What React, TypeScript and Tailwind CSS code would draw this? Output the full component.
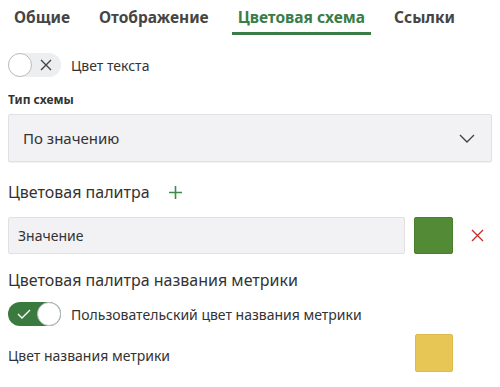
import { useState } from "react"

const TABS = ["Общие", "Отображение", "Цветовая схема", "Ссылки"]

function Toggle({ on, onChange }: { on: boolean; onChange: () => void }) {
  return (
    <button
      onClick={onChange}
      className={`relative w-[53px] h-6 rounded-full shrink-0 flex items-center ${on ? "bg-[#3b7a3f]" : "bg-[#eceef0]"}`}
    >
      {on ? (
        <svg className="absolute left-[9px] top-[7px]" width="14" height="10" viewBox="0 0 14 10" fill="none">
          <path d="M1 5l4 4 8-8" stroke="#fff" strokeWidth="1.4" />
        </svg>
      ) : (
        <svg className="absolute right-[9px] top-[6px]" width="12" height="12" viewBox="0 0 12 12" fill="none">
          <path d="M1 1l10 10M11 1L1 11" stroke="#444" strokeWidth="1.4" />
        </svg>
      )}
      <span
        className={`absolute top-0 w-6 h-6 rounded-full bg-white border border-[#b9bcc0] ${on ? "right-0" : "left-0"}`}
      />
    </button>
  )
}

export default function App() {
  const [tab, setTab] = useState(2)
  const [textColor, setTextColor] = useState(false)
  const [customName, setCustomName] = useState(true)

  return (
    <div className="w-[500px] h-[387px] bg-white px-2 text-[#333] font-['Noto_Sans',sans-serif]">
      {/* Tabs */}
      <div className="flex gap-[17px] h-[35px]">
        {TABS.map((t, i) => (
          <button
            key={t}
            onClick={() => setTab(i)}
            className={`px-[6px] pt-[2px] text-[15.5px] font-bold h-[35px] border-b-[3px] leading-[24px] ${i === tab ? "text-[#3b7d46] border-[#3b7d46]" : "text-[#454545] border-transparent"}`}
          >
            {t}
          </button>
        ))}
      </div>

      <div className="flex items-center gap-[10px] mt-[18px] h-6">
        <Toggle on={textColor} onChange={() => setTextColor(!textColor)} />
        <span className="text-[14px]">Цвет текста</span>
      </div>

      <p className="mt-[15px] text-[12px] font-bold leading-[16px]">Тип схемы</p>

      <div className="mt-[6px] h-[48px] bg-[#f2f2f4] border border-[#e1e1e4] rounded-[2px] flex items-center justify-between pl-[14px] pr-[16px] shadow-[0_1px_1px_rgba(0,0,0,0.06)]">
        <span className="text-[15px]">По значению</span>
        <svg width="16" height="9" viewBox="0 0 16 9" fill="none">
          <path d="M1 1l7 7 7-7" stroke="#444" strokeWidth="1.4" />
        </svg>
      </div>

      <div className="flex items-center gap-[19px] mt-[17px] h-[26px]">
        <span className="text-[16px]">Цветовая палитра</span>
        <svg width="13" height="13" viewBox="0 0 13 13" fill="none">
          <path d="M6.5 0v13M0 6.5h13" stroke="#3f8a4a" strokeWidth="1.6" />
        </svg>
      </div>

      <div className="flex items-center mt-[12px]">
        <div className="w-[397px] h-[37px] bg-[#f2f2f4] border border-[#e1e1e4] rounded-[2px] flex items-center pl-[9px] text-[14px]">
          Значение
        </div>
        <div className="ml-[9px] w-[39px] h-[37px] bg-[#528a35] border border-[#4b7f30] rounded-[2px]" />
        <svg className="ml-[18px]" width="13" height="13" viewBox="0 0 13 13" fill="none">
          <path d="M1 1l11 11M12 1L1 12" stroke="#c6302c" strokeWidth="1.4" />
        </svg>
      </div>

      <p className="mt-[13px] text-[16px] leading-[26px]">Цветовая палитра названия метрики</p>

      <div className="flex items-center gap-[10px] mt-[9px] h-6">
        <Toggle on={customName} onChange={() => setCustomName(!customName)} />
        <span className="text-[14px]">Пользовательский цвет названия метрики</span>
      </div>

      <div className="flex items-center justify-between mt-[8px] h-[38px] pr-[39px]">
        <span className="text-[14px] mt-[4px]">Цвет названия метрики</span>
        <div className="w-[38px] h-[38px] bg-[#e8c655] border border-[#dcbb4c] rounded-[2px]" />
      </div>
    </div>
  )
}
